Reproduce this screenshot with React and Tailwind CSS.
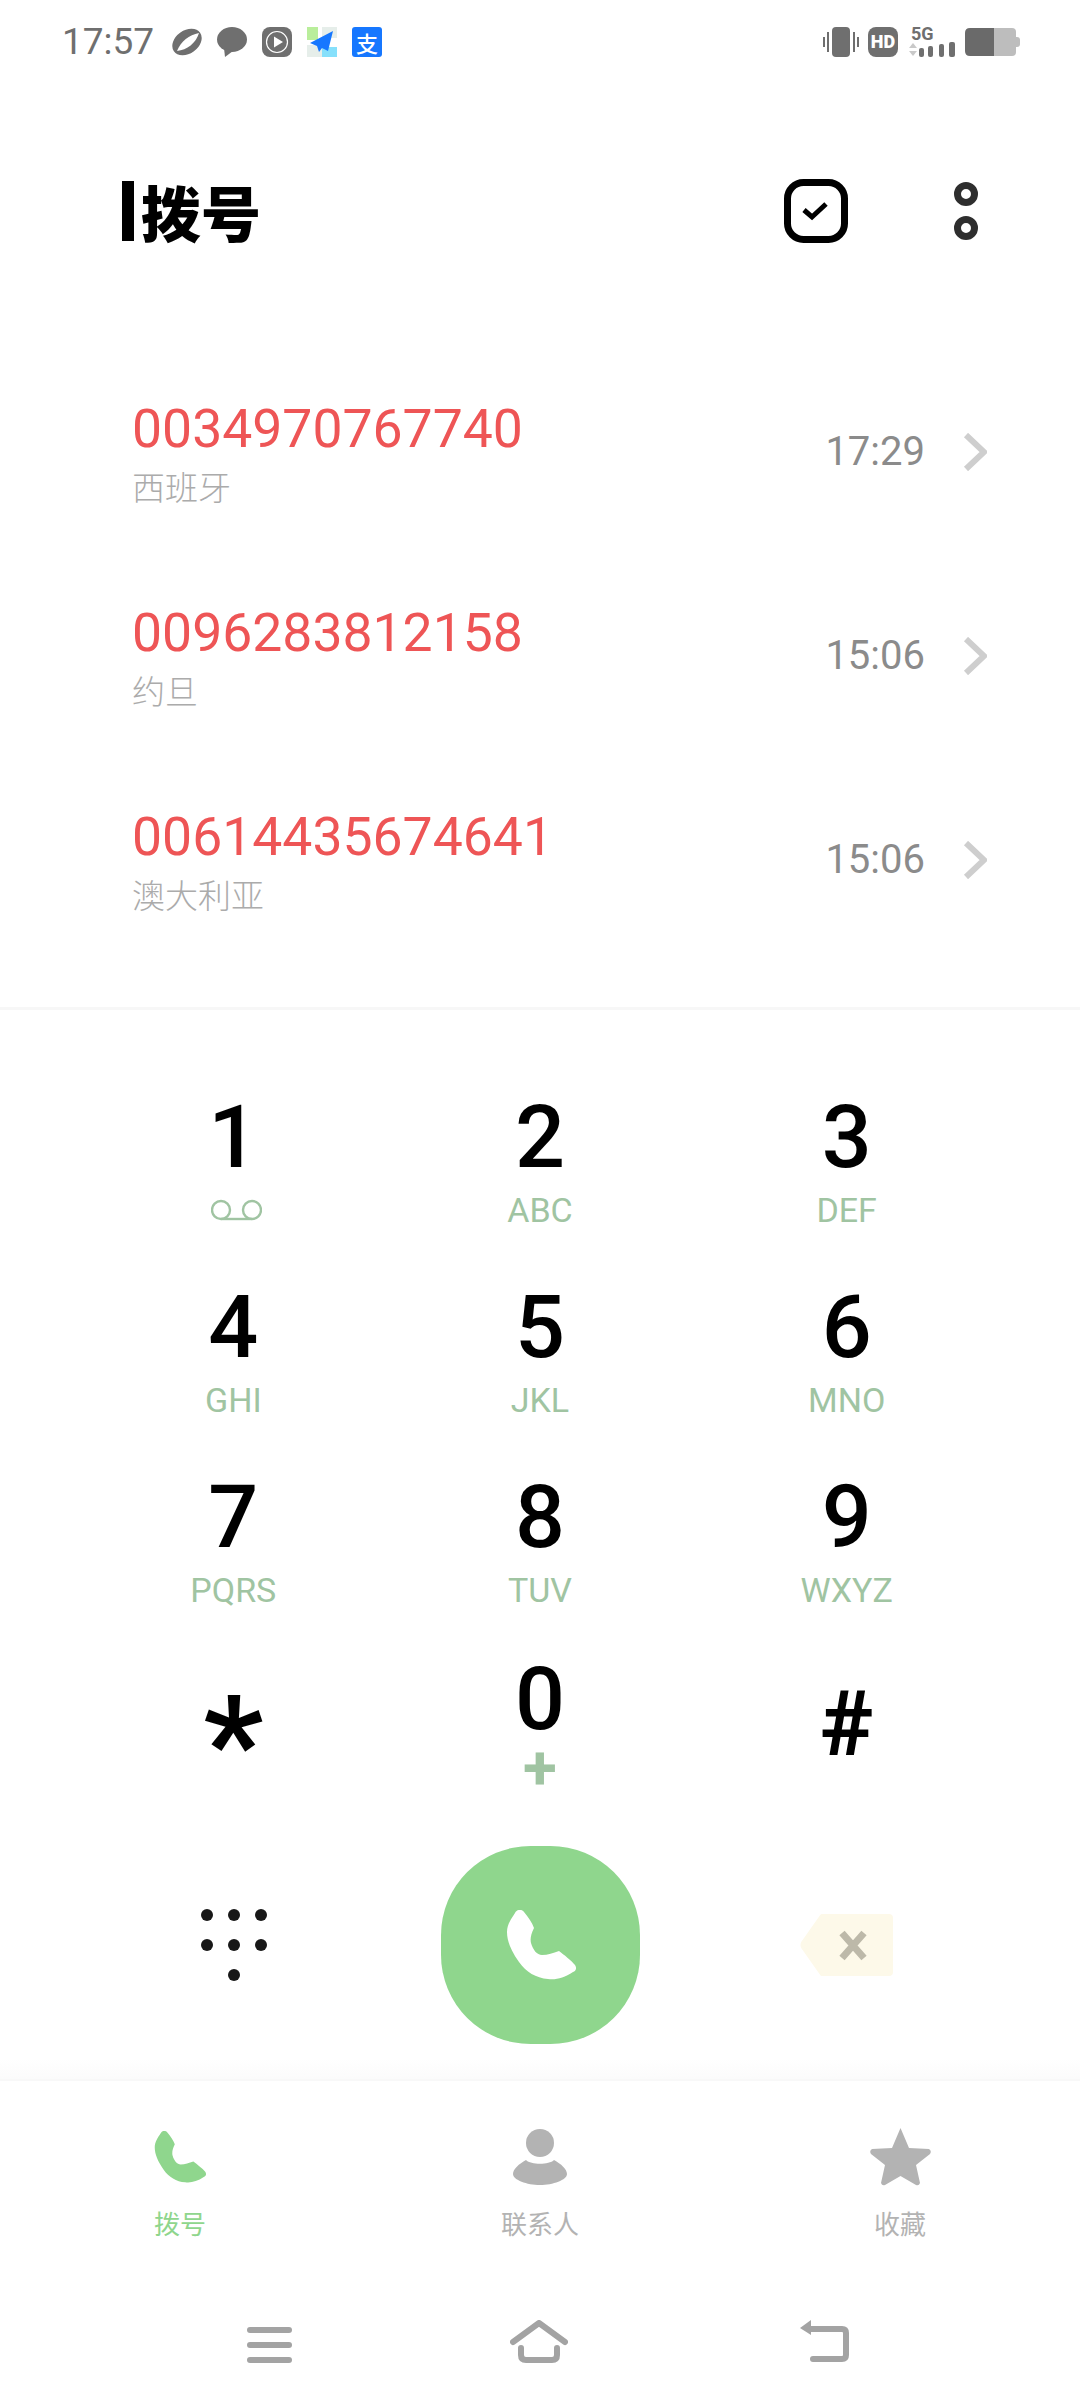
const sans = "font-['Roboto','Noto_Sans_CJK_SC',sans-serif]";

const PHONE =
  "M9 3C11-1 16-1 18 2C22 7 26 12 28 18C25 24 24 29 25 33C27 40 31 45 36 45C42 45 47 43 53 41C58 45 65 50 69 55C71 58 70 61 67 62C58 68 50 70 42 69C30 68 20 62 13 52C5 41 1 31 1 22C1 15 5 9 9 3Z";

const calls = [
  { number: "0034970767740", place: "西班牙", time: "17:29" },
  { number: "0096283812158", place: "约旦", time: "15:06" },
  { number: "00614435674641", place: "澳大利亚", time: "15:06" },
];

const keys = [
  [
    { digit: "1", sub: "voicemail" },
    { digit: "2", sub: "ABC" },
    { digit: "3", sub: "DEF" },
  ],
  [
    { digit: "4", sub: "GHI" },
    { digit: "5", sub: "JKL" },
    { digit: "6", sub: "MNO" },
  ],
  [
    { digit: "7", sub: "PQRS" },
    { digit: "8", sub: "TUV" },
    { digit: "9", sub: "WXYZ" },
  ],
];

const StatusBar = () => (
  <div className="h-[84px] flex items-center pl-[62px] shrink-0">
    <span className="w-[110px] text-[37px] leading-[30px] text-[#6f6f6f]">17:57</span>
    <svg className="w-[30px] h-[30px]" viewBox="0 0 30 30">
      <ellipse cx="15" cy="15" rx="16" ry="11.5" transform="rotate(-35 15 15)" fill="#6f6f6f" />
      <path d="M5 24C9 14 17 8 27 6C24 16 15 23 5 24Z" fill="#fff" />
    </svg>
    <svg className="w-[30px] h-[30px] ml-[15px]" viewBox="0 0 30 30">
      <ellipse cx="15" cy="12.5" rx="15" ry="12.5" fill="#6f6f6f" />
      <path d="M7 21L8 30L16 24Z" fill="#6f6f6f" />
    </svg>
    <svg className="w-[30px] h-[30px] ml-[15px]" viewBox="0 0 30 30">
      <rect width="30" height="30" rx="8" fill="#6f6f6f" />
      <circle cx="15" cy="15" r="10.5" fill="none" stroke="#fff" strokeWidth="1.2" />
      <path d="M12 9.5L21 15L12 20.5Z" fill="#fff" />
    </svg>
    <svg className="w-[30px] h-[30px] ml-[15px]" viewBox="0 0 30 30">
      <rect width="11" height="13" fill="#b9ee9b" />
      <rect x="15" width="15" height="11" fill="#e6eeea" />
      <rect y="18" width="15" height="12" fill="#e6eeea" />
      <rect x="15" y="20" width="15" height="10" fill="#86e0fb" />
      <path d="M26 4L3 16L10 19L12 25L15 21L21 24Z" fill="#1677ff" />
    </svg>
    <div className="w-[30px] h-[30px] ml-[15px] rounded-[3px] bg-[#1677ff] flex items-center justify-center text-white text-[22px] leading-[30px] font-['Noto_Sans_CJK_SC',sans-serif] font-medium">
      支
    </div>
    <div className="ml-auto flex items-center mr-[60px]">
      <svg className="w-[36px] h-[30px]" viewBox="0 0 36 30">
        <rect x="9" width="18" height="30" rx="4" fill="#6f6f6f" />
        <rect x="0" y="10" width="2" height="10" fill="#6f6f6f" />
        <rect x="4" y="5" width="2" height="20" fill="#6f6f6f" />
        <rect x="30" y="5" width="2" height="20" fill="#6f6f6f" />
        <rect x="34" y="10" width="2" height="10" fill="#6f6f6f" />
      </svg>
      <div className="w-[30px] h-[30px] ml-[9px] rounded-[8px] bg-[#6f6f6f] flex items-center justify-center text-white text-[18px] leading-[30px] font-black">
        HD
      </div>
      <div className="w-[46px] h-[32px] ml-[11px] flex flex-col">
        <span className="pl-[2px] h-[16px] text-[18px] leading-[16px] font-bold text-[#6f6f6f]">5G</span>
        <svg className="w-[46px] h-[16px]" viewBox="0 0 46 16">
          <path d="M0 6L4 1L8 6Z" fill="#c9c9c9" />
          <path d="M0 9L8 9L4 14Z" fill="#c9c9c9" />
          <rect x="10" y="6" width="5" height="9" rx="2" fill="#6f6f6f" />
          <rect x="19" y="4" width="5" height="11" rx="2" fill="#6f6f6f" />
          <rect x="30" y="2" width="5" height="13" rx="2" fill="#6f6f6f" />
          <rect x="40" y="0" width="6" height="15" rx="2" fill="#6f6f6f" />
        </svg>
      </div>
      <svg className="w-[55px] h-[28px] ml-[10px]" viewBox="0 0 55 28">
        <path d="M29 0H47Q51 0 51 4V24Q51 28 47 28H29Z" fill="#bdbdbd" />
        <path d="M29 0H5Q0 0 0 5V23Q0 28 5 28H29Z" fill="#6a6a6a" />
        <path d="M51 9H52Q55 9 55 12V16Q55 19 52 19H51Z" fill="#bdbdbd" />
      </svg>
    </div>
  </div>
);

const Header = () => (
  <div className="h-[254px] flex items-center pl-[122px] shrink-0">
    <div className="w-[12px] h-[60px] bg-black" />
    <h1 className="ml-[7px] text-[60px] leading-[60px] font-black text-black font-['Noto_Sans_CJK_SC',sans-serif]">
      拨号
    </h1>
    <svg className="w-[64px] h-[64px] ml-auto" viewBox="0 0 64 64">
      <rect x="3.5" y="3.5" width="57" height="57" rx="16" fill="none" stroke="#000" strokeWidth="7" />
      <path d="M20 31L28 38L42 25" fill="none" stroke="#000" strokeWidth="5" />
    </svg>
    <div className="ml-[106px] mr-[102px] flex flex-col gap-[10px]">
      <div className="w-[24px] h-[24px] rounded-full border-[7px] border-[#2e2e2e]" />
      <div className="w-[24px] h-[24px] rounded-full border-[7px] border-[#2e2e2e]" />
    </div>
  </div>
);

const CallRow = ({ call }) => (
  <div className="h-[204px] flex items-center pl-[132px] pr-[93px]">
    <div className="flex flex-col">
      <span className={`text-[53.5px] leading-[56px] text-[#ee5556] ${sans}`}>{call.number}</span>
      <span className="mt-[12px] text-[33px] leading-[34px] text-[#ababab] font-['Noto_Sans_CJK_SC',sans-serif] font-light">
        {call.place}
      </span>
    </div>
    <span className={`ml-auto text-[40px] leading-[40px] text-[#8b8b8b] ${sans}`}>{call.time}</span>
    <svg className="w-[24px] h-[38px] ml-[38px]" viewBox="0 0 24 38">
      <path d="M3 2L21 19L3 36" fill="none" stroke="#cecece" strokeWidth="6" />
    </svg>
  </div>
);

const Voicemail = () => (
  <svg className="w-[51px] h-[24px] ml-[6px]" viewBox="0 0 51 24">
    <circle cx="10" cy="12" r="9" fill="none" stroke="#a0c4a2" strokeWidth="2.4" />
    <circle cx="41" cy="12" r="9" fill="none" stroke="#a0c4a2" strokeWidth="2.4" />
    <path d="M10 21H41" stroke="#a0c4a2" strokeWidth="2.4" />
  </svg>
);

const Key = ({ digit, sub }) => (
  <div className="flex flex-col items-center">
    <span className={`h-[64px] text-[88px] leading-[64px] font-medium text-black ${sans}`}>{digit}</span>
    <div className={`h-[24px] mt-[29px] flex items-center text-[34px] leading-[24px] text-[#a0c4a2] ${sans}`}>
      {sub === "voicemail" ? <Voicemail /> : sub}
    </div>
  </div>
);

const Keypad = () => (
  <div className="mt-[95px] px-[80px] shrink-0">
    <div className="flex flex-col gap-y-[73px]">
      {keys.map((row) => (
        <div key={row[0].digit} className="grid grid-cols-3">
          {row.map((k) => (
            <Key key={k.digit} {...k} />
          ))}
        </div>
      ))}
    </div>
    <div className="mt-[65px] grid grid-cols-3 items-start h-[116px]">
      <span className={`h-[116px] flex justify-center text-[132px] leading-[154px] font-bold text-black ${sans}`}>*</span>
      <div className="flex flex-col items-center">
        <span className={`h-[64px] text-[88px] leading-[64px] font-medium text-black ${sans}`}>0</span>
        <span className={`h-[31px] mt-[21px] text-[62px] leading-[31px] font-bold text-[#a0c4a2] ${sans}`}>+</span>
      </div>
      <span className={`mt-[26px] flex justify-center text-[90px] leading-[64px] font-bold text-black ${sans}`}>#</span>
    </div>
  </div>
);

const DotPad = () => (
  <div className="ml-[2px] grid grid-cols-3 gap-x-[15px] gap-y-[18px] w-[66px]">
    {[0, 1, 2, 3, 4, 5].map((i) => (
      <div key={i} className="w-[12px] h-[12px] rounded-full bg-[#181818]" />
    ))}
    <div className="col-start-2 w-[12px] h-[12px] rounded-full bg-[#181818]" />
  </div>
);

const CallActions = () => (
  <div className="mt-[63px] px-[80px] grid grid-cols-3 items-center shrink-0">
    <div className="flex justify-center">
      <DotPad />
    </div>
    <div className="flex justify-center">
      <div className="ml-[2px] w-[199px] h-[198px] rounded-[45%] bg-[#8fd68d] flex items-center justify-center">
        <svg className="w-[70px] h-[70px]" viewBox="0 0 70 70">
          <path d={PHONE} fill="#fff" />
        </svg>
      </div>
    </div>
    <div className="flex justify-center">
      <svg className="w-[93px] h-[62px]" viewBox="0 0 93 62">
        <path d="M22 2H89Q91 2 91 4V58Q91 60 89 60H22L3 33Q2 31 3 29Z" fill="#fdf9e9" stroke="#fdf9e9" strokeWidth="4" strokeLinejoin="round" />
        <path d="M42 19L64 44M64 19L42 44" stroke="#bdb9a9" strokeWidth="7" />
      </svg>
    </div>
  </div>
);

const Tab = ({ label, active, children }) => (
  <div className="flex flex-col items-center">
    <div className="h-[60px] flex items-center justify-center">{children}</div>
    <span
      className={`mt-[23px] text-[26px] leading-[26px] font-['Noto_Sans_CJK_SC',sans-serif] ${
        active ? "text-[#8fd68d]" : "text-[#b3b3b3]"
      }`}
    >
      {label}
    </span>
  </div>
);

const BottomBar = () => (
  <div className="flex-1 bg-white">
    <div className="h-[22px] mt-[15px] bg-gradient-to-b from-white to-[#fbfbfb] border-b-2 border-[#f8f8f8]" />
    <div className="pt-[46px] grid grid-cols-3">
      <Tab label="拨号" active>
        <svg className="w-[52px] h-[52px]" viewBox="0 0 70 70">
          <path d={PHONE} fill="#8fd68d" />
        </svg>
      </Tab>
      <Tab label="联系人">
        <svg className="w-[54px] h-[56px]" viewBox="0 0 54 56">
          <ellipse cx="27" cy="14" rx="14" ry="14" fill="#b3b3b3" />
          <path d="M13 31C18 36 36 36 41 31C48 35 54 40 54 45C54 51 40 56 27 56C14 56 0 51 0 45C0 40 6 35 13 31Z" fill="#b3b3b3" />
        </svg>
      </Tab>
      <Tab label="收藏">
        <svg className="w-[61px] h-[58px]" viewBox="0 0 61 58">
          <path d="M30.5 0L39 20L59 21Q62 23 60 26L46 37L50 55Q49 58 46 57L30.5 48L15 57Q12 58 11 55L15 37L1 26Q-1 23 2 21L22 20Z" fill="#b3b3b3" />
        </svg>
      </Tab>
    </div>
    <div className="mt-[84px] flex items-start">
      <div className="ml-[247px] mt-[7px] flex flex-col gap-[9px] w-[45px]">
        <div className="h-[6px] rounded-full bg-[#a3a3a3]" />
        <div className="h-[6px] rounded-full bg-[#a3a3a3]" />
        <div className="h-[6px] rounded-full bg-[#a3a3a3]" />
      </div>
      <svg className="ml-[218px] w-[58px] h-[43px]" viewBox="0 0 58 43" fill="none" stroke="#a3a3a3" strokeWidth="6" strokeLinecap="round" strokeLinejoin="round">
        <path d="M3 22L29 3L55 22" />
        <path d="M11 28V35Q11 40 16 40H42Q47 40 47 35V28" />
      </svg>
      <svg className="ml-[232px] w-[49px] h-[42px]" viewBox="0 0 49 42" fill="none">
        <path d="M10 9H42Q46 9 46 13V35Q46 39 42 39H13" stroke="#a3a3a3" strokeWidth="6" strokeLinecap="round" />
        <path d="M0 8L11 0V15Z" fill="#a3a3a3" />
      </svg>
    </div>
  </div>
);

const App = () => {
  return (
    <div className={`w-[1080px] h-[2408px] bg-white flex flex-col overflow-hidden ${sans}`}>
      <StatusBar />
      <Header />
      <div className="mt-[12px] shrink-0">
        {calls.map((call) => (
          <CallRow key={call.number} call={call} />
        ))}
      </div>
      <div className="mt-[45px] h-[3px] bg-[#f7f7f7] shrink-0" />
      <Keypad />
      <CallActions />
      <BottomBar />
    </div>
  );
};

export default App;
